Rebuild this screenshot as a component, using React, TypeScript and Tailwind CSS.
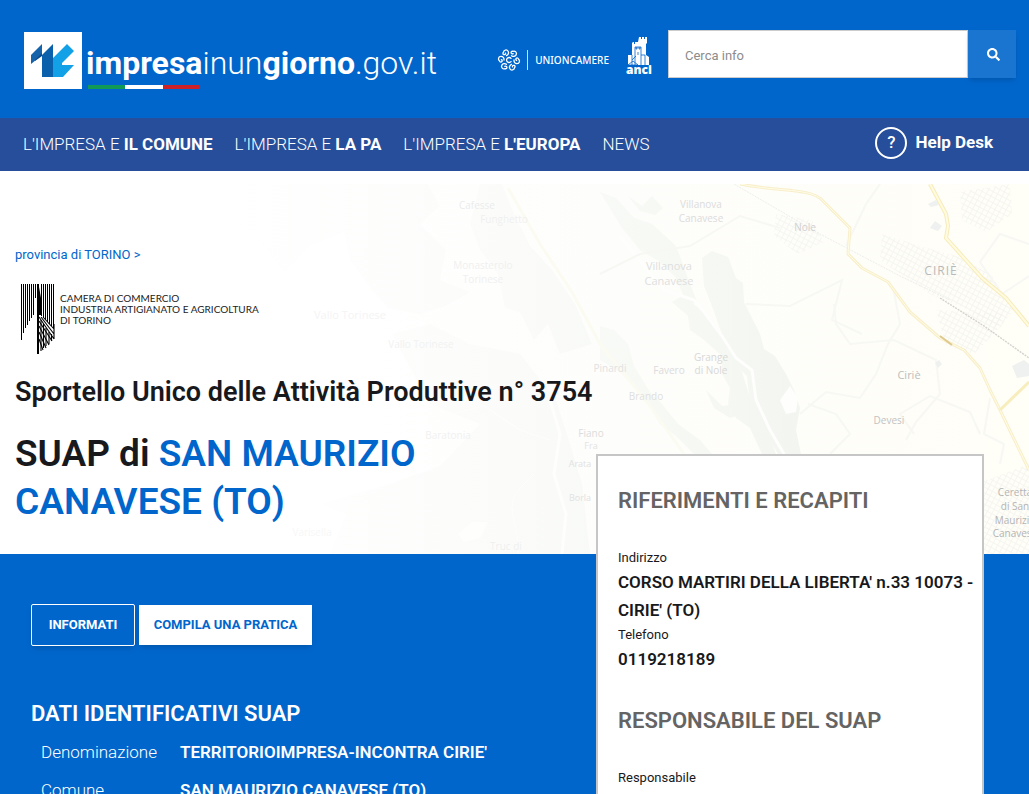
import { FaSearch } from 'react-icons/fa'

// SUAP municipality page: site header, main nav, map hero with the office
// title, then the blue data section with the contact card pulled up over it.

const NAV = [
  { lead: "L'IMPRESA E", strong: 'IL COMUNE' },
  { lead: "L'IMPRESA E", strong: 'LA PA' },
  { lead: "L'IMPRESA E", strong: "L'EUROPA" },
  { lead: 'NEWS', strong: '' },
]

const DATI = [
  { label: 'Denominazione', value: "TERRITORIOIMPRESA-INCONTRA CIRIE'" },
  { label: 'Comune', value: 'SAN MAURIZIO CANAVESE (TO)' },
]

type Place = { x: number; y: number; text: string; size: number; fill: string }

const PLACES: Place[] = [
  { x: 477, y: 25, text: 'Cafesse', size: 10, fill: '#ececec' },
  { x: 504, y: 39, text: 'Funghetto', size: 10, fill: '#f0f0f0' },
  { x: 483, y: 85, text: 'Monasterolo', size: 10, fill: '#f0f0f0' },
  { x: 483, y: 99, text: 'Torinese', size: 10, fill: '#f0f0f0' },
  { x: 350, y: 135, text: 'Vallo Torinese', size: 11, fill: '#f4f4f4' },
  { x: 421, y: 164, text: 'Vallo Torinese', size: 10, fill: '#f2f2f2' },
  { x: 448, y: 255, text: 'Baratonia', size: 10, fill: '#f1f1f1' },
  { x: 312, y: 352, text: 'Varisella', size: 10, fill: '#f7f7f7' },
  { x: 506, y: 366, text: 'Truc di', size: 10, fill: '#efefef' },
  { x: 701, y: 24, text: 'Villanova', size: 10, fill: '#dcdcdc' },
  { x: 701, y: 38, text: 'Canavese', size: 10, fill: '#dcdcdc' },
  { x: 669, y: 86, text: 'Villanova', size: 11, fill: '#dfdfdf' },
  { x: 669, y: 101, text: 'Canavese', size: 11, fill: '#dfdfdf' },
  { x: 805, y: 47, text: 'Nole', size: 10, fill: '#d0d0d0' },
  { x: 610, y: 188, text: 'Pinardi', size: 10, fill: '#e2e2e2' },
  { x: 669, y: 190, text: 'Favero', size: 10, fill: '#dcdcdc' },
  { x: 711, y: 177, text: 'Grange', size: 10, fill: '#d8d8d8' },
  { x: 711, y: 190, text: 'di Nole', size: 10, fill: '#d8d8d8' },
  { x: 646, y: 216, text: 'Brando', size: 10, fill: '#dfdfdf' },
  { x: 909, y: 195, text: 'Ciriè', size: 11, fill: '#bdbdbd' },
  { x: 889, y: 240, text: 'Devesi', size: 10, fill: '#c2c2c2' },
  { x: 591, y: 253, text: 'Fiano', size: 10, fill: '#dcdcdc' },
  { x: 591, y: 265, text: 'Fra', size: 9, fill: '#e4e4e4' },
  { x: 580, y: 283, text: 'Arata', size: 9, fill: '#e2e2e2' },
  { x: 580, y: 317, text: 'Borla', size: 9, fill: '#e2e2e2' },
  { x: 1015, y: 312, text: 'Ceretta', size: 10, fill: '#b4b4b4' },
  { x: 1015, y: 326, text: 'di San', size: 10, fill: '#b4b4b4' },
  { x: 1015, y: 340, text: 'Maurizio', size: 10, fill: '#b4b4b4' },
  { x: 1015, y: 353, text: 'Canavese', size: 10, fill: '#b4b4b4' },
]

function MapBackground() {
  return (
    <svg
      aria-hidden="true"
      viewBox="0 0 1029 370"
      preserveAspectRatio="xMaxYMin slice"
      className="absolute inset-x-0 bottom-0 h-[370px] w-full"
    >
      <defs>
        <linearGradient id="land" x1="0" x2="1">
          <stop offset="0" stopColor="#ffffff" />
          <stop offset="0.35" stopColor="#ffffff" />
          <stop offset="0.6" stopColor="#fdfdfb" />
          <stop offset="1" stopColor="#fffef7" />
        </linearGradient>
        <linearGradient id="wood" gradientUnits="userSpaceOnUse" x1="220" x2="800" y1="0" y2="0">
          <stop offset="0" stopColor="#ffffff" />
          <stop offset="0.5" stopColor="#fbfcfa" />
          <stop offset="1" stopColor="#f3f6f0" />
        </linearGradient>
        <pattern id="streets" width="5" height="5" patternUnits="userSpaceOnUse" patternTransform="rotate(28)">
          <path d="M0 0H5M0 0V5" stroke="#f3f3f0" strokeWidth="1.4" />
        </pattern>
      </defs>
      <rect width="1029" height="370" fill="url(#land)" />

      <g fill="url(#wood)">
        <path d="M224 0H428L440 22L420 40L446 66L440 96L470 108L446 122L420 130L388 124L370 104L350 76L344 48L310 62L284 90L262 60L224 30Z" />
        <path d="M480 0H502L514 30L530 62L552 86L575 120L592 160L560 170L548 140L534 156L520 128L505 124L498 90L480 66L470 40Z" />
        <path d="M392 150L430 140L470 160L520 170L556 216L570 260L582 300L590 370H330L346 330L320 320L390 300L440 282L480 240L430 220Z" />
        <path d="M600 8L616 14L634 34L652 40L676 62L682 78L690 100L698 120L686 118L676 94L660 78L640 66L622 44Z" />
        <path d="M628 12L642 22L652 12L663 24L655 31L640 27Z" />
        <path d="M702 74L712 67L728 73L736 94L743 99L744 118L760 150L764 165L775 172L786 190L794 206L800 224L796 246L801 270H778L764 246L750 220L747 192L730 176L722 150L712 122L704 102Z" />
        <path d="M672 118L682 112L696 122L712 136L726 160L742 188L750 214L768 248L776 270H762L750 244L736 234L728 220L730 204L722 190L722 172L704 156L690 146L688 132Z" />
        <path d="M600 142L614 146L628 160L634 182L650 208L662 220L678 240L700 256L712 270H694L676 252L660 240L644 214L620 188L600 176Z" />
        <path d="M706 206L722 222L738 220L744 230L730 234L714 224Z" />
      </g>

      {/* rivers and clearings cutting through the woods */}
      <g fill="none" stroke="#fefefd">
        <path d="M620 52L636 72L664 106L694 116L704 128L722 152L736 174L752 186L756 216L770 246L784 270" strokeWidth="3" />
        <path d="M534 290C520 304 512 310 512 324S520 350 518 370" strokeWidth="1" />
        <path d="M430 236L460 228L484 222L520 246L550 256" />
        <path d="M550 216L560 250L554 290L566 330L562 370" strokeWidth="3" />
      </g>
      <g fill="#fefefd">
        <path d="M458 350l14-12 16 0-8 16-16 4z" />
        <path d="M780 216l10-14 8 12-2 14-10 2z" />
      </g>

      <g fill="url(#streets)">
        <path d="M882 50L920 62L964 74L992 92L1014 126L998 146L964 124L930 110L904 92L880 76Z" />
        <path d="M936 126L1004 130L996 148L974 170L946 162Z" />
        <path d="M960 8L1010 0L1012 30L986 48L962 36Z" />
        <path d="M776 30L812 36L824 58L798 70L774 52Z" />
        <path d="M976 300L1029 280V370H984Z" />
      </g>

      <g fill="none" stroke="#f7f7f4" strokeWidth="2">
        <path d="M600 90L640 70L690 62L740 32L780 44" />
        <path d="M746 120L790 122L842 96L832 136L862 150" />
        <path d="M834 120L836 140L850 160L894 156L936 176L940 210L916 238L906 256" />
        <path d="M894 108L900 140L888 160L876 190L860 214L826 208L800 230" />
        <path d="M808 220L836 230L850 250L830 270" />
        <path d="M914 250L900 230L930 212L970 228L980 250" />
        <path d="M1029 60L1000 50L980 78L1002 110L1029 92" />
        <path d="M990 214L984 250L1004 260L1000 280" />
        <path d="M846 62L866 20L880 0" />
      </g>

      {/* railway */}
      <g fill="none">
        <path d="M734 0L820 50L900 92L950 116" stroke="#eeeeec" strokeDasharray="2 1" />
        <path d="M940 114L984 142L1029 174" stroke="#d6d3cf" strokeWidth="1.4" strokeDasharray="2 1" />
      </g>

      {/* main roads */}
      <g fill="none" strokeLinejoin="round">
        <path d="M740 0C780 8 810 4 822 16L850 44L848 70L862 84L888 98L910 128L940 154L964 166L980 184L990 206L1000 226L1029 286" stroke="#f8efca" strokeWidth="3" />
        <path d="M740 0C780 8 810 4 822 16L850 44L848 70L862 84L888 98L910 128L940 154L964 166L980 184L990 206L1000 226L1029 286" stroke="#fffce8" strokeWidth="1" />
        <path d="M930 0L946 30L948 42L946 54L964 74L982 94L1006 114L1029 142" stroke="#f7ebb8" strokeWidth="4" />
        <path d="M930 0L946 30L948 42L946 54L964 74L982 94L1006 114L1029 142" stroke="#fffbe0" strokeWidth="2" />
        <path d="M1000 226L1029 198" stroke="#f7edbd" strokeWidth="3" />
        <path d="M508 4L540 60L572 108L600 160L650 222L684 270" stroke="#fbfbf1" strokeWidth="3" />
        <path d="M940 152L952 161" stroke="#dfc98d" strokeWidth="2" />
      </g>

      <g fill="#eff1f0">
        <path d="M928 20l8-4 3 5-8 2zM930 44l5-7 7 5-4 5z" />
        <path d="M1012 182l12-6 5 4v12l-12 2zM935 179l4-3 3 4-4 4z" />
      </g>

      <g className="font-['Open_Sans',sans-serif]" textAnchor="middle">
        {PLACES.map((p) => (
          <text key={`${p.text}-${p.x}-${p.y}`} x={p.x} y={p.y} fontSize={p.size} fill={p.fill}>
            {p.text}
          </text>
        ))}
        <text x="941" y="91" fontSize="12" letterSpacing="1" fill="#b9b9b9">
          CIRIÈ
        </text>
      </g>
    </svg>
  )
}

function SiteLogo() {
  return (
    <a href="#" className="mt-[2px] flex items-start gap-1 text-white">
      <svg aria-hidden="true" viewBox="0 0 58 57" className="h-[57px] w-[58px]">
        <rect width="58" height="57" fill="#fff" />
        <path d="M7 23L18 12V23L7 32Z" fill="#1563ab" />
        <path d="M18 23L29 12V45H18Z" fill="#0b60ac" />
        <path d="M11 28L18 21V24L11 29Z" fill="#0a4a8a" />
        <path d="M29 26L43 12L50 19L38 31V33H50L39 45H29Z" fill="#12a0e6" />
      </svg>
      <span className="flex flex-col">
        <span className="mt-[9px] text-[32px] leading-[44px] font-light">
          <b className="font-bold">impresa</b>inun<b className="font-bold">giorno</b>.gov.it
        </span>
        <span aria-hidden="true" className="ml-[2px] flex h-1 w-28">
          <span className="flex-1 bg-[#109a56]" />
          <span className="flex-1 bg-white" />
          <span className="flex-1 bg-[#cd2129]" />
        </span>
      </span>
    </a>
  )
}

function UnioncamereLogo() {
  return (
    <a href="#" className="mt-[18px] flex h-6 items-center text-white">
      <svg aria-hidden="true" viewBox="-12 -12 24 24" className="size-6" fill="none" stroke="#fff" strokeWidth="1.3" strokeLinecap="round">
        <path d="M2 -1.6A2.5 2.5 0 1 0 2 1.6" />
        {/* ring of six curls, each one hooking into the next */}
        {[30, 90, 150, 210, 270, 330].map((a) => (
          <path
            key={a}
            transform={`rotate(${a})`}
            d="M0.4 -7.600A1.300 1.300 0 1 1 -1 -9.400C0.400 -11.400 3.600 -10.600 3.600 -8C3.600 -6 2 -4.800 0 -5"
          />
        ))}
      </svg>
      <span className="ml-[6px] h-5 w-px bg-white/80" />
      <span className="ml-[7px] font-['Noto_Sans',sans-serif] text-[10px] font-medium">UNIONCAMERE</span>
    </a>
  )
}

function AnciLogo() {
  return (
    <a href="#" aria-label="anci" className="mt-[7px] ml-[18px]">
      <svg aria-hidden="true" viewBox="0 0 24 38" className="h-[38px] w-6 overflow-visible" fill="#fff">
        <path d="M12 0h2v2h1V0h2v2h1V0h2v6l-1 1v11l3 2v8H1V18h4V6l1-1h1v2h1V5h3z" />
        <g fill="none" stroke="#0066cc" strokeWidth="0.8">
          <path d="M8 28V10h6v18M9 10v2h1v-2m2 0v2h1v-2M11 15v3M5 18v10M5 23l4-4M14 18h4v10" />
          <path d="M1 28l5-4 5 4z" />
        </g>
        <text x="12" y="37" textAnchor="middle" fontSize="12" fontWeight="900" className="font-['Open_Sans',sans-serif]">
          anci
        </text>
      </svg>
    </a>
  )
}

// Stripes hanging from the top edge: left ones get shorter towards the
// middle, the right ones end at the foot of the fan.
const STRIPES = [56, 49, 44, 41, 37, 34, 31, 14]

function CameraCommercioLogo() {
  return (
    <div className="mt-[19px] ml-[6px] flex h-[70px] items-start gap-[5px]">
      <svg aria-hidden="true" viewBox="0 0 34 70" className="h-[70px] w-[34px]">
        {STRIPES.map((h, i) => (
          <rect key={i} x={i * 2} y="0" width="1" height={h} />
        ))}
        <rect x="16" y="0" width="2" height="70" />
        <path d="M18 3L20 14V31H18Z" />
        {[20, 22, 24, 26, 28, 30, 32].map((x) => (
          <rect key={x} x={x} y="0" width="1" height={30 + (x - 18)} />
        ))}
        <g stroke="#000" strokeWidth="1.1" fill="none">
          <path d="M18 33L33 55M18 37L31 57M18 42L28 61M18 48L25 64M18 55L22 66M20 33L33 50M22 33L33 45M33 40V55" />
          <path d="M20 36V67M22.5 40V64M25 44V62M28 48V60M30.5 50V57" />
        </g>
      </svg>
      <p className="mt-[9px] font-['Lato',sans-serif] text-[10px] leading-[11px] text-[#222]">
        CAMERA DI COMMERCIO
        <br />
        INDUSTRIA ARTIGIANATO E AGRICOLTURA
        <br />
        DI TORINO
      </p>
    </div>
  )
}

function Contact({ label, value }: { label: string; value: string }) {
  return (
    <div className="pt-px">
      <dt className="text-[13px] leading-5">{label}</dt>
      <dd className="text-[17px] leading-7 font-semibold">{value}</dd>
    </div>
  )
}

export default function App() {
  return (
    <div className="h-screen overflow-y-auto bg-[#0066cc] font-['Roboto',sans-serif] text-[#17191c] [scrollbar-width:none]">
      <header>
        <div className="flex items-start pt-[30px] pr-[13px] pb-[29px] pl-6">
          <SiteLogo />
          <div className="ml-auto flex items-start">
            <UnioncamereLogo />
            <AnciLogo />
            <form className="ml-[17px] flex" onSubmit={(e) => e.preventDefault()}>
              <input
                type="search"
                aria-label="Cerca info"
                placeholder="Cerca info"
                className="h-12 w-[300px] border border-[#ccc] bg-white px-4 pt-[2px] text-[13px] text-[#17191c] placeholder:text-[#8c8c8c]"
              />
              <button
                type="submit"
                aria-label="Cerca"
                className="flex h-12 w-12 items-center justify-center bg-[#1a75d1] pl-[2px] text-white shadow-md"
              >
                <FaSearch size={13} />
              </button>
            </form>
          </div>
        </div>
        <nav className="flex h-[53px] items-center bg-[#264e9a] pr-9 pl-[23px] text-[17px] text-white">
          <ul className="flex gap-[22px]">
            {NAV.map((item) => (
              <li key={item.lead + item.strong}>
                <a href="#" className="font-light">
                  {item.lead} <strong className="font-bold">{item.strong}</strong>
                </a>
              </li>
            ))}
          </ul>
          <a href="#" className="ml-auto flex items-center gap-2 pb-1 font-bold">
            <span className="flex size-8 items-center justify-center rounded-full border-2 border-white font-medium">?</span>
            Help Desk
          </a>
        </nav>
      </header>

      <section className="relative bg-white px-[15px] pt-[74px] pb-7">
        <MapBackground />
        <div className="relative">
          <a href="#" className="block text-[13px] leading-5 text-[#0066cc]">
            provincia di TORINO &gt;
          </a>
          <CameraCommercioLogo />
          <h2 className="mt-[22px] text-[27px] leading-8 font-semibold">
            Sportello Unico delle Attività Produttive n° 3754
          </h2>
          <h1 className="mt-[22px] max-w-[480px] text-[37px] leading-12 font-semibold">
            SUAP di <span className="text-[#0066cc]">SAN MAURIZIO CANAVESE (TO)</span>
          </h1>
        </div>
      </section>

      <section className="flex items-start pr-[45px] pl-[31px]">
        <div className="flex-1 pt-[50px] text-white">
          <div className="flex items-center gap-1 text-[13px] font-bold">
            <button className="h-[42px] w-[104px] rounded-xs border border-white shadow-md">INFORMATI</button>
            <button className="h-10 w-[173px] bg-white text-[#0066cc] shadow-md">COMPILA UNA PRATICA</button>
          </div>
          <h2 className="mt-[52px] text-[22px] leading-8 font-semibold">DATI IDENTIFICATIVI SUAP</h2>
          <table className="mt-[3px] text-left text-[17px] leading-6">
            <tbody>
              {DATI.map((row) => (
                <tr key={row.label}>
                  <th scope="row" className="w-[149px] py-[7px] pl-[10px] font-light">
                    {row.label}
                  </th>
                  <td className="py-[7px] font-semibold">{row.value}</td>
                </tr>
              ))}
            </tbody>
          </table>
        </div>

        <aside className="relative -mt-[100px] w-[388px] shrink-0 border-2 border-[#c6c6c6] bg-white pt-[29px] pr-1 pb-10 pl-5">
          <h2 className="text-[22px] leading-8 font-semibold text-[#646464]">RIFERIMENTI E RECAPITI</h2>
          <dl className="mt-[30px]">
            <Contact label="Indirizzo" value="CORSO MARTIRI DELLA LIBERTA' n.33 10073 - CIRIE' (TO)" />
            <Contact label="Telefono" value="0119218189" />
          </dl>
          <h2 className="mt-8 text-[22px] leading-8 font-semibold text-[#646464]">RESPONSABILE DEL SUAP</h2>
          <dl className="mt-[30px]">
            <Contact label="Responsabile" value="" />
          </dl>
        </aside>
      </section>
    </div>
  )
}
